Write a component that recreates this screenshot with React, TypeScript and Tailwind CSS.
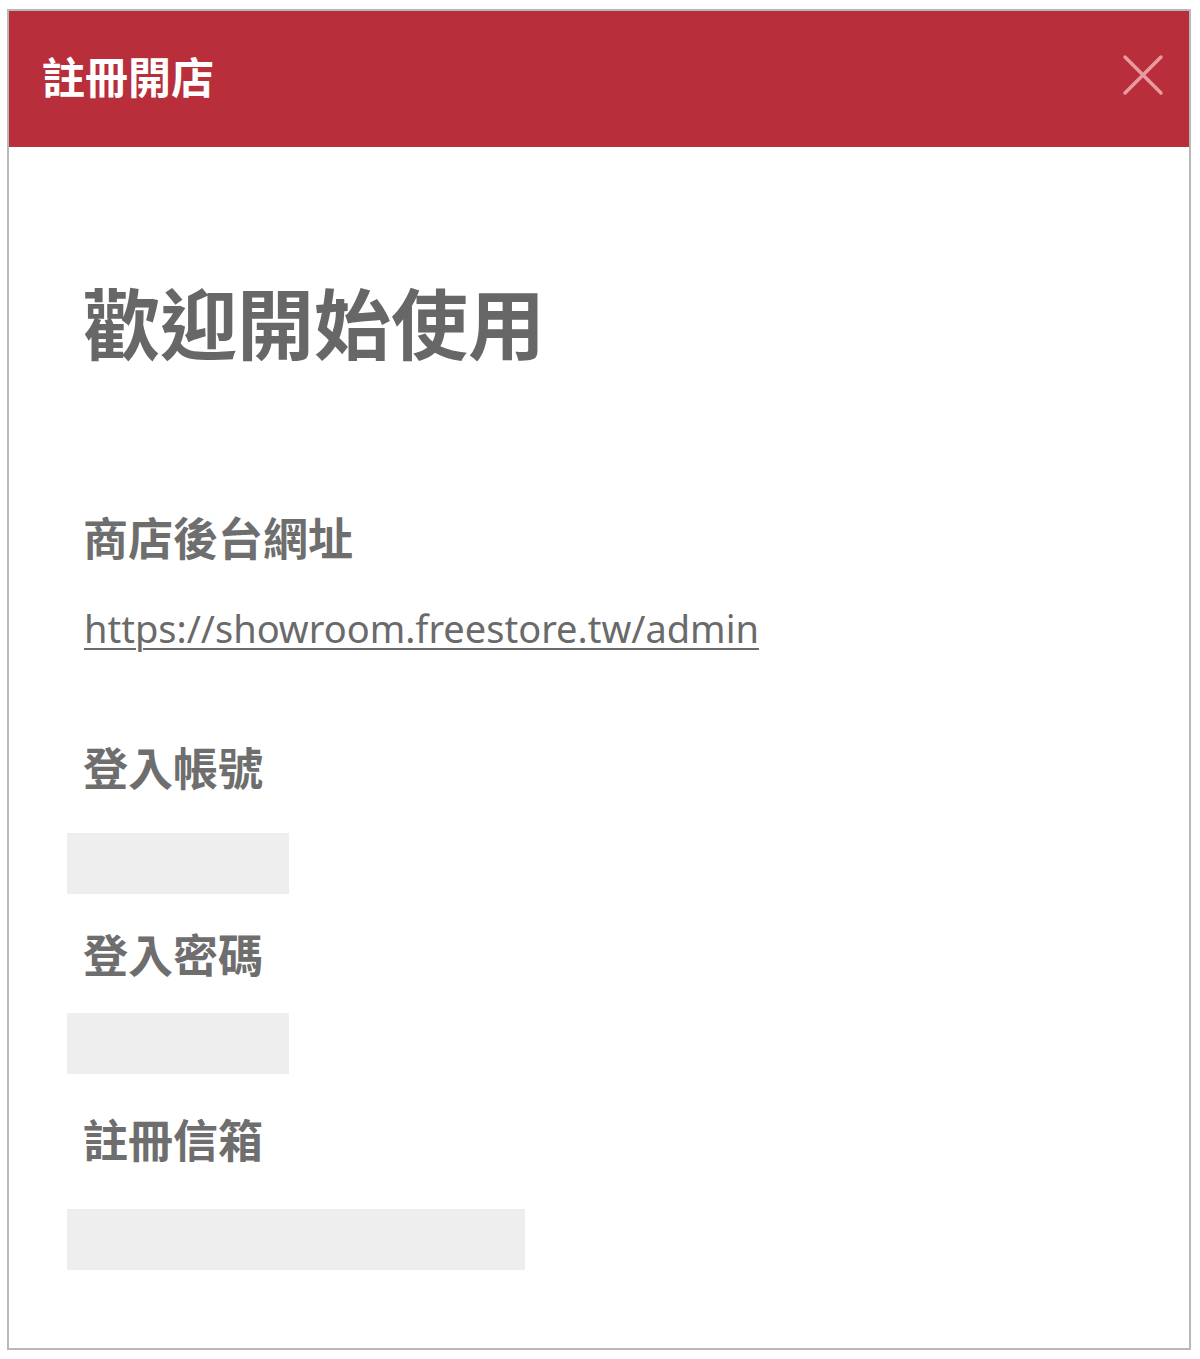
import React from 'react';

const cjk = '"Noto Sans CJK TC", "Noto Sans", sans-serif';

const Label: React.FC<{ text: string; className?: string }> = ({ text, className }) => (
  <h3
    className={`ml-[16px] text-[45px] leading-none font-bold text-[#6e6e6e] ${className ?? ''}`}
    style={{ fontFamily: cjk }}
  >
    {text}
  </h3>
);

const Blank: React.FC<{ className: string }> = ({ className }) => (
  <div className={`h-[61px] bg-[#eeeeee] ${className}`} />
);

const App: React.FC = () => {
  return (
    <div className="w-[1200px] h-[1359px] bg-white pt-[9px] pl-[7px]">
      <div className="w-[1184px] h-[1341px] border-2 border-[#b8b8b8] bg-white flex flex-col">
        <header className="h-[136px] bg-[#b82e3a] flex items-start justify-between pt-[43px] pl-[33px] pr-[24px]">
          <h1 className="text-[43px] leading-none font-bold text-white" style={{ fontFamily: cjk }}>
            註冊開店
          </h1>
          <button className="w-[44px] h-[44px] flex items-center justify-center -mt-[1px]">
            <svg width="42" height="42" viewBox="0 0 42 42" fill="none">
              <path d="M3 3 L39 39 M39 3 L3 39" stroke="#e89aa1" strokeWidth="3.5" strokeLinecap="round" />
            </svg>
          </button>
        </header>

        <div className="pl-[58px] flex flex-col items-start">
          <h2
            className="mt-[135px] ml-[16px] text-[77px] leading-none font-bold text-[#676767]"
            style={{ fontFamily: cjk }}
          >
            歡迎開始使用
          </h2>

          <Label text="商店後台網址" className="mt-[155px]" />
          <a
            href="#"
            className="mt-[50px] ml-[17px] text-[38px] leading-none text-[#6a6a6a] underline underline-offset-[5px] decoration-2"
            style={{ fontFamily: '"Noto Sans", "Open Sans", sans-serif' }}
          >
            https://showroom.freestore.tw/admin
          </a>

          <Label text="登入帳號" className="mt-[97px]" />
          <Blank className="mt-[44px] w-[222px]" />

          <Label text="登入密碼" className="mt-[37px]" />
          <Blank className="mt-[37px] w-[222px]" />

          <Label text="註冊信箱" className="mt-[42px]" />
          <Blank className="mt-[48px] w-[458px]" />
        </div>
      </div>
    </div>
  );
};

export default App;
